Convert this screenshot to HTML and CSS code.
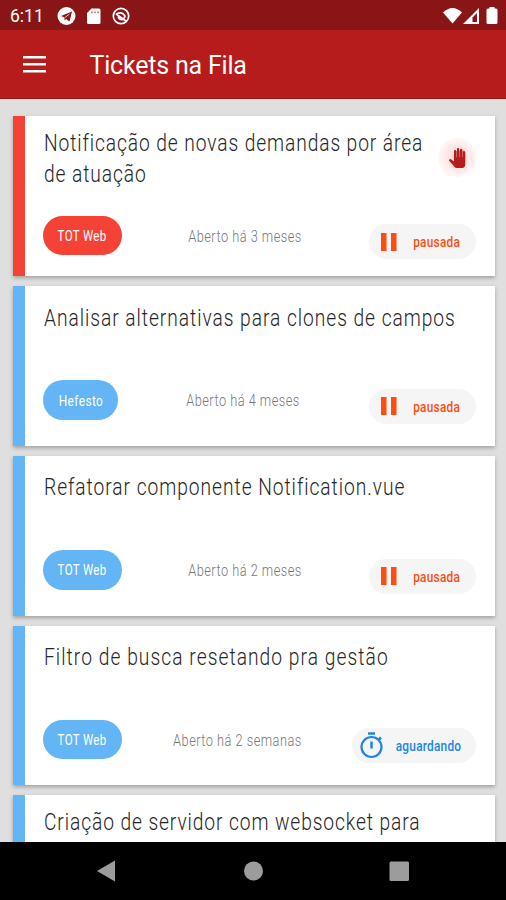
FILE: index.html
```
<!DOCTYPE html>
<html lang="pt-BR">
<head>
    <meta charset="UTF-8">
    <meta name="viewport" content="width=device-width, initial-scale=1.0">
    <title>Tickets na Fila</title>
    <link rel="stylesheet" href="styles.css">
</head>
<body>
    <div class="status-bar">
        <span class="clock">6:11</span>
        <svg class="status-left" width="74" height="20" viewBox="0 0 74 20">
            <circle cx="9.500" cy="10" r="9" fill="#fff"/>
            <path d="M4 10l11-4.500-2.500 10-3.500-2.500-1.500 1.500v-3z" fill="#8a1517"/>
            <path d="M8 11.500l4.500-3.500" stroke="#fff" stroke-width=".8"/>
            <path d="M34.500 2.500H42q1.500 0 1.500 1.500v12.500q0 1.500-1.500 1.500H31.500q-1.500 0-1.500-1.500V7z" fill="#fff"/>
            <path d="M35 5.500v1.700M38 5.500v1.700M41 5.500v1.700" stroke="#8a1517" stroke-width="1"/>
            <circle cx="64" cy="10" r="7.700" fill="none" stroke="#fff" stroke-width="1.700"/>
            <path d="M59 8.500q5-4 9 1.500-1 4-4 3.500-3-.5-2.500-3.500M59 8l10 7" fill="none" stroke="#fff" stroke-width="1.700"/>
        </svg>
        <svg class="status-right" width="56" height="20" viewBox="0 0 56 20">
            <path d="M0 6.500Q9.500-2.500 19 6.500L9.500 17.500z" fill="#fff"/>
            <path d="M20 18L36 2v16z" fill="#fff"/>
            <path d="M29.500 11.500L34 7v9h-4.500z" fill="#8a1517"/>
            <path d="M46.500 2.500V1h5v1.500H53q1.500 0 1.500 1.500v12.500q0 1.500-1.500 1.500h-8q-1.500 0-1.500-1.500V4q0-1.500 1.500-1.500z" fill="#fff"/>
        </svg>
    </div>
    <header class="app-bar">
        <button class="menu-button" aria-label="Menu">
            <svg width="24" height="18" viewBox="0 0 24 18"><path d="M0 2.300h23M0 9.300h23M0 16.300h23" stroke="#fff" stroke-width="2.500"/></svg>
        </button>
        <h1>Tickets na Fila</h1>
    </header>

    <main class="ticket-list">
        <div class="ticket urgent two-lines">
            <h2><span>Notificação de novas demandas por área</span><span>de atuação</span></h2>
            <div class="hand">
                <svg width="18" height="20" viewBox="0 0 24 24" preserveAspectRatio="none"><path d="M8 4h3l1-1h9l2 3v6H8z" fill="#d9777a"/><path d="M23 5.500V20c0 2.200-1.800 4-4 4h-7.300c-1.080 0-2.100-.43-2.850-1.190L1 14.830s1.260-1.230 1.300-1.250c.22-.19.49-.29.79-.29.220 0 .42.060.6.160.04.010 4.310 2.460 4.310 2.460V4c0-.83.67-1.500 1.500-1.500S11 3.170 11 4v7h1V1.500c0-.83.67-1.500 1.500-1.500S15 .67 15 1.500V11h1V2.500c0-.83.67-1.500 1.500-1.500s1.500.67 1.500 1.500V11h1V5.500c0-.83.67-1.500 1.500-1.500s1.500.67 1.500 1.500z" fill="#b71c1c"/></svg>
            </div>
            <div class="ticket-footer">
                <div class="chip"><span>TOT Web</span></div>
                <div class="opened"><span>Aberto há 3 meses</span></div>
                <div class="state paused">
                    <svg width="16" height="18" viewBox="0 0 16 18"><path d="M0 0h5.500v18H0zM10 0h5.500v18H10z" fill="#ff4d12"/></svg>
                    <div class="label"><span>pausada</span></div>
                </div>
            </div>
        </div>

        <div class="ticket">
            <h2><span class="loose">Analisar alternativas para clones de campos</span></h2>
            <div class="ticket-footer">
                <div class="chip short"><span>Hefesto</span></div>
                <div class="opened"><span>Aberto há 4 meses</span></div>
                <div class="state paused">
                    <svg width="16" height="18" viewBox="0 0 16 18"><path d="M0 0h5.500v18H0zM10 0h5.500v18H10z" fill="#ff4d12"/></svg>
                    <div class="label"><span>pausada</span></div>
                </div>
            </div>
        </div>

        <div class="ticket">
            <h2><span class="loose">Refatorar componente Notification.vue</span></h2>
            <div class="ticket-footer">
                <div class="chip"><span>TOT Web</span></div>
                <div class="opened"><span>Aberto há 2 meses</span></div>
                <div class="state paused">
                    <svg width="16" height="18" viewBox="0 0 16 18"><path d="M0 0h5.500v18H0zM10 0h5.500v18H10z" fill="#ff4d12"/></svg>
                    <div class="label"><span>pausada</span></div>
                </div>
            </div>
        </div>

        <div class="ticket">
            <h2><span class="looser">Filtro de busca resetando pra gestão</span></h2>
            <div class="ticket-footer">
                <div class="chip"><span>TOT Web</span></div>
                <div class="opened"><span>Aberto há 2 semanas</span></div>
                <div class="state waiting">
                    <svg width="24" height="27" viewBox="0 0 24 27"><circle cx="11.500" cy="15" r="10" fill="none" stroke="#2185e8" stroke-width="2.200"/><path d="M8 1.600h7M11.500 9.500v7M18.500 8l2.500-2.500" fill="none" stroke="#2185e8" stroke-width="2.500"/></svg>
                    <div class="label"><span>aguardando</span></div>
                </div>
            </div>
        </div>

        <div class="ticket two-lines">
            <h2><span>Criação de servidor com websocket para</span></h2>
        </div>
    </main>

    <nav class="nav-bar">
        <svg width="506" height="58" viewBox="0 0 506 58" fill="#9c9c9c">
            <path d="M97 29L115 18.500v21z"/>
            <circle cx="253.500" cy="29" r="9.500"/>
            <rect x="389.500" y="19.500" width="19.500" height="19.500" rx="1.500"/>
        </svg>
    </nav>
</body>
</html>
```
FILE: styles.css
```
* {
    box-sizing: border-box;
}
html, body {
    height: 100%;
    margin: 0;
}
body {
    display: flex;
    flex-direction: column;
    overflow: hidden;
    background-color: #dfdfdf;
    font-family: Roboto, "Liberation Sans", sans-serif;
}
.status-bar {
    flex: none;
    display: flex;
    align-items: center;
    height: 30px;
    padding: 0 7px 0 10px;
    background-color: #8a1517;
    color: #fff;
}
.clock {
    width: 46.500px;
    font-size: 17.500px;
    line-height: 30px;
    padding-top: 2px;
}
.status-right {
    margin-left: auto;
    margin-top: 1px;
}
.status-left {
    margin-top: 1px;
}
.app-bar {
    flex: none;
    display: flex;
    align-items: center;
    height: 69px;
    padding-left: 23px;
    background-color: #b71c1c;
    border-bottom: 1px solid #ab0f10;
    color: #fff;
}
.menu-button {
    display: flex;
    width: 66.500px;
    padding: 0;
    border: 0;
    background: none;
}
h1 {
    margin: 3px 0 0;
    font-size: 25px;
    font-weight: 400;
    letter-spacing: -0.2px;
}
.ticket-list {
    flex: 1;
    min-height: 0;
    overflow: hidden;
    display: flex;
    flex-direction: column;
    gap: 10px;
    padding: 16.300px 11.500px 0 12.500px;
    border-top: 1px solid #f0e4e0;
}
.ticket {
    position: relative;
    flex: none;
    height: 159.800px;
    padding: 16.500px 18.500px 0;
    background: #fff;
    border-left: 12.500px solid #64b5f6;
    box-shadow: 0 2px 4px rgba(0,0,0,0.28);
}
.ticket.two-lines {
    padding-top: 12px;
}
.ticket.urgent {
    border-left-color: #f44336;
}
h2 {
    height: 77.700px;
    margin: 0;
    padding-left: 0.7px;
    font-size: 24px;
    font-weight: 300;
    line-height: 31px;
    color: #262626;
    white-space: nowrap;
}
.two-lines h2 {
    height: 87.700px;
}
/* Narrow the letterforms, keeping their height */
h2 span {
    display: block;
    width: max-content;
    transform: scaleX(0.8);
    transform-origin: left;
    letter-spacing: 1.13px;
}
h2 .loose {
    letter-spacing: 1.2px;
}
h2 .looser {
    letter-spacing: 1.32px;
}
.hand {
    position: absolute;
    top: 22px;
    right: 18px;
    display: flex;
    align-items: center;
    justify-content: center;
    width: 39px;
    height: 39px;
    border-radius: 50%;
    background: radial-gradient(circle, #ffdede 25%, #fff5f5 65%);
}
.ticket-footer {
    display: flex;
    justify-content: space-between;
    align-items: flex-start;
}
.chip {
    display: flex;
    align-items: center;
    justify-content: center;
    width: 79px;
    height: 39.500px;
    padding-top: 1px;
    border-radius: 20px;
    background: #64b5f6;
    color: #fff;
    font-size: 15.500px;
    white-space: nowrap;
}
.chip.short {
    width: 75px;
}
.urgent .chip {
    background: #f44336;
}
.chip span {
    transform: scaleX(0.74);
    letter-spacing: 0.5px;
}
.chip.short span {
    transform: scaleX(0.77);
}
.opened {
    display: flex;
    justify-content: center;
    width: 114px;
    font-size: 16px;
    font-weight: 300;
    line-height: 41px;
    color: #777;
    white-space: nowrap;
}
.opened span {
    flex: none;
    transform: scaleX(0.8);
    letter-spacing: 0.6px;
}
.state {
    display: flex;
    align-items: center;
    height: 35px;
    margin-top: 8.500px;
    border-radius: 18px;
    background: #f5f5f5;
    font-size: 15px;
    font-weight: 500;
}
.label {
    display: flex;
    justify-content: center;
    padding-top: 1px;
}
.label span {
    flex: none;
    transform: scaleX(0.79);
    letter-spacing: 0.3px;
}
.paused {
    width: 107.500px;
    padding-left: 12.500px;
    color: #ff4d12;
}
.paused .label {
    width: 48px;
    margin-left: 16px;
}
.waiting {
    width: 124px;
    padding-left: 8px;
    color: #2185e8;
}
.waiting .label {
    width: 65px;
    margin-left: 12px;
}
.nav-bar {
    flex: none;
    height: 58px;
    background: #000;
}
```
